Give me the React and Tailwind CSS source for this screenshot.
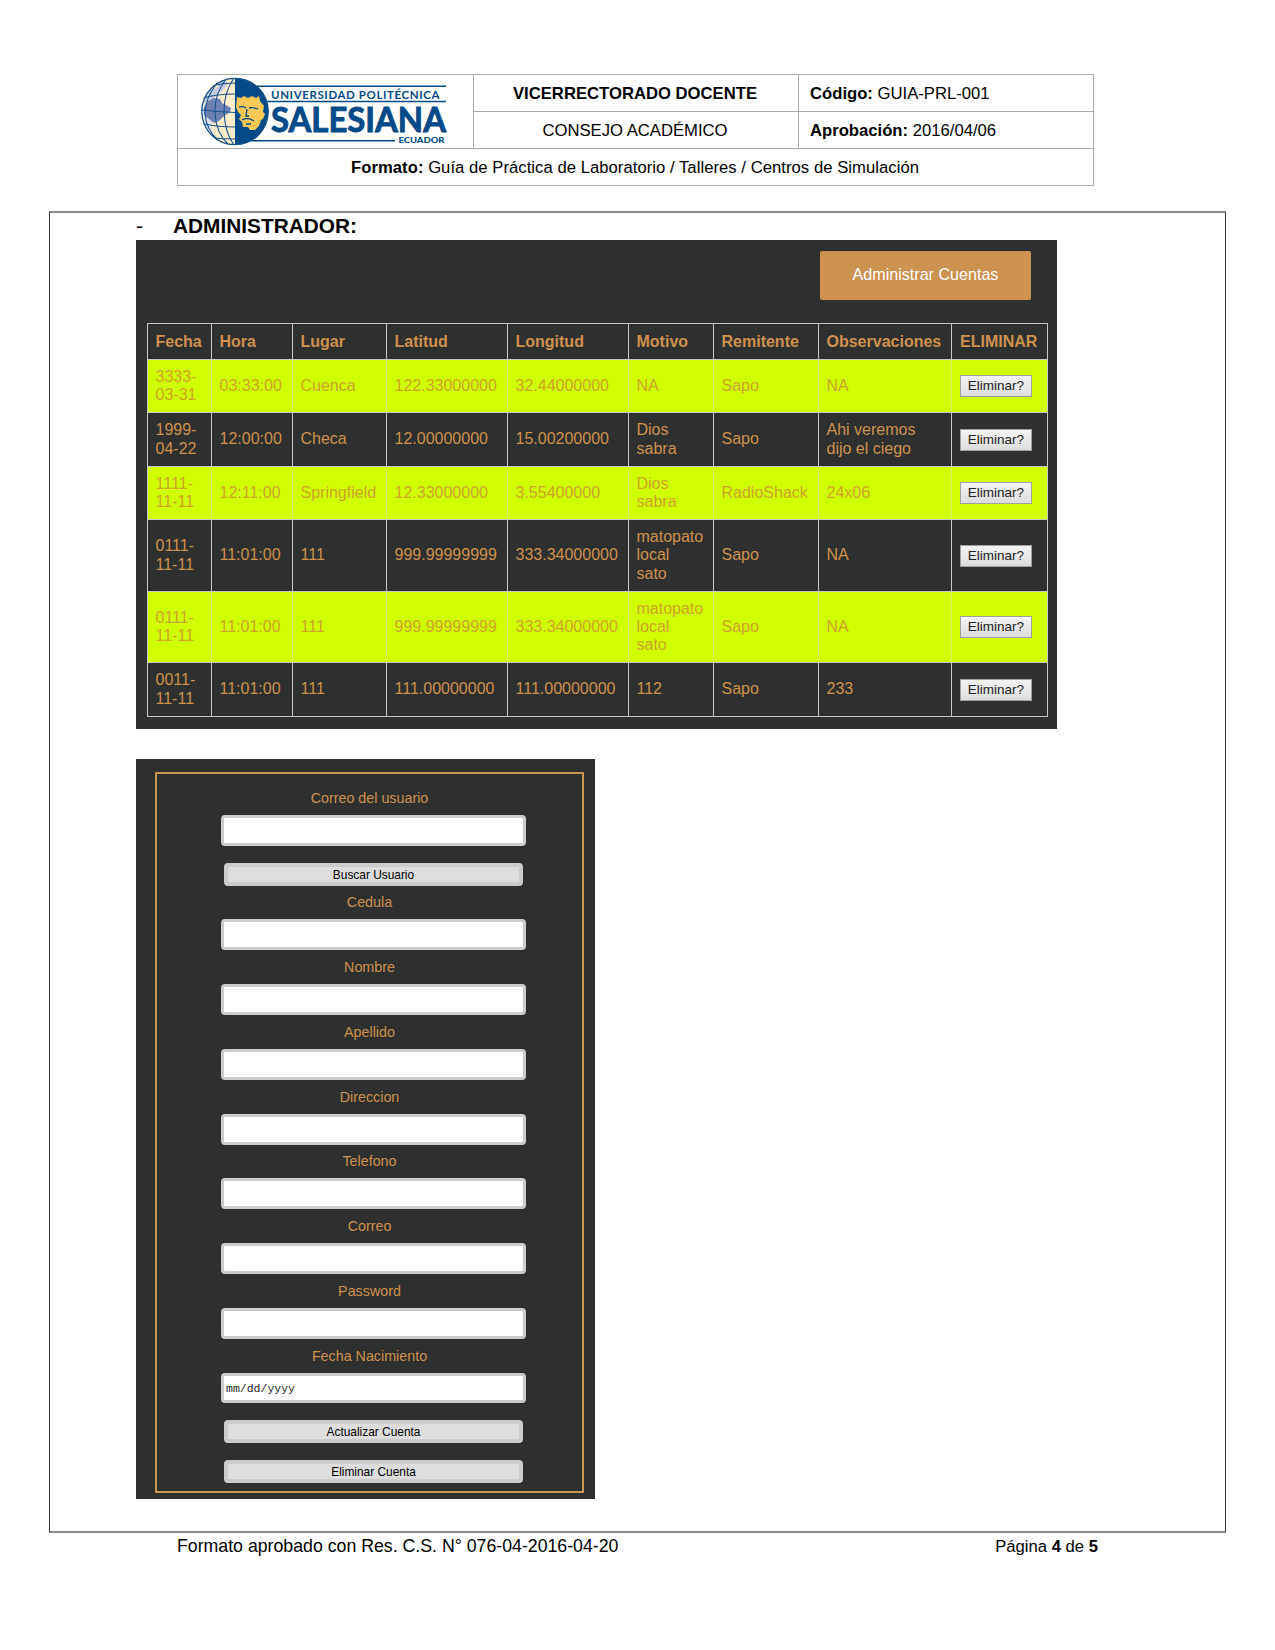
import React from "react";

const HEADERS = ["Fecha", "Hora", "Lugar", "Latitud", "Longitud", "Motivo", "Remitente", "Observaciones"];

const ROWS = [
  { h: "h-[53px]", lime: true, c: ["3333-\n03-31", "03:33:00", "Cuenca", "122.33000000", "32.44000000", "NA", "Sapo", "NA"] },
  { h: "h-[54px]", lime: false, c: ["1999-\n04-22", "12:00:00", "Checa", "12.00000000", "15.00200000", "Dios\nsabra", "Sapo", "Ahi veremos\ndijo el ciego"] },
  { h: "h-[53px]", lime: true, c: ["1111-\n11-11", "12:11:00", "Springfield", "12.33000000", "3.55400000", "Dios\nsabra", "RadioShack", "24x06"] },
  { h: "h-[72px]", lime: false, c: ["0111-\n11-11", "11:01:00", "111", "999.99999999", "333.34000000", "matopato\nlocal\nsato", "Sapo", "NA"] },
  { h: "h-[71px]", lime: true, c: ["0111-\n11-11", "11:01:00", "111", "999.99999999", "333.34000000", "matopato\nlocal\nsato", "Sapo", "NA"] },
  { h: "h-[54px]", lime: false, c: ["0011-\n11-11", "11:01:00", "111", "111.00000000", "111.00000000", "112", "Sapo", "233"] },
];

const GRID = "grid grid-cols-[64px_81px_94px_121px_121px_85px_105px_133px_96px]";

function Logo() {
  return (
    <svg width="260" height="72" viewBox="196 75 260 72" className="block">
      <defs>
        <clipPath id="left"><path d="M235 78A34 33.5 0 0 0 235 145Z" /></clipPath>
      </defs>
      <circle cx="235" cy="111.5" r="33.5" fill="#034a88" />
      <g clipPath="url(#left)">
        <rect x="200" y="76" width="36" height="72" fill="#fdeecb" />
        <path d="M203 98L210 90L217 88L220 82L225 80L228 84L222 91L217 95L211 101L205 104Z" fill="#c3cbe2" />
        <path d="M201 103L208 106L211 110L214 117L211 127L214 138L204 128L200 114Z" fill="#dfe2ec" />
        <path d="M204 108L208 101L214 98L220 99L222 103L231 108L230 112L224 116L219 121L214 123L209 119L204 115Z" fill="#6f80b4" />
        <g fill="none" stroke="#17508a" strokeWidth="1.1">
          <path d="M203 98Q217 94 235 94M201 110Q217 112 235 112.500M204 124Q218 127 235 127M212 86Q222 83 235 83M213 138Q223 139 235 139" />
          <path d="M226 79Q214 95 215 113Q216 133 228 144M217 83Q205 99 205 113Q206 130 218 140M234 78Q224 92 224 112Q225 133 234 145" />
        </g>
      </g>
      <circle cx="235" cy="111.500" r="33.200" fill="none" stroke="#17508a" strokeWidth="1.200" />
      <path d="M237 97L241 98L244 96L248 98L252 96L256 98L259 96L260 101L264 106L263 112L265 114L263 119L261 120L259 126L255 130L250 130L248 127L243 127L242 122L239 119L241 115L238 112L236 107Z" fill="#fbc85a" />
      <path d="M239 107Q243 106 246 108M249 108Q253 107 258 109M247 109L246 116L249 116M242 120Q248 117 254 121M246 124L251 124" fill="none" stroke="#034a88" strokeWidth="1.300" />
      <g stroke="#034a88" strokeWidth="1.400">
        <path d="M257 86.200H446M266 101.500H446M251 140.800H395" />
      </g>
      <g fill="#034a88" fontFamily="Lato, sans-serif" fontWeight="700">
        <text x="271" y="98.500" fontSize="11.500" textLength="168.500" lengthAdjust="spacing">UNIVERSIDAD POLITÉCNICA</text>
        <text x="271" y="131.700" fontSize="34" textLength="175" lengthAdjust="spacingAndGlyphs" stroke="#034a88" strokeWidth="0.900">SALESIANA</text>
        <text x="398.500" y="142.800" fontSize="8" fontWeight="900" textLength="46" lengthAdjust="spacingAndGlyphs">ECUADOR</text>
      </g>
    </svg>
  );
}

function PageHeader() {
  return (
    <header className="ml-[177px] grid h-[112px] w-[917px] grid-cols-[296px_325px_294px] grid-rows-[37px_36px_37px] border border-[#aaa] text-[16.67px] leading-[37px]">
      <div className="row-span-2 border-r border-[#aaa] pl-[18px]">
        <Logo />
      </div>
      <div className="border-r border-b border-[#aaa] pr-[2px] text-center font-bold">VICERRECTORADO DOCENTE</div>
      <div className="border-b border-[#aaa] pl-[11px]"><b>Código:</b> GUIA-PRL-001</div>
      <div className="border-r border-[#aaa] pr-[2px] text-center">CONSEJO ACADÉMICO</div>
      <div className="pl-[11px]"><b>Aprobación:</b> 2016/04/06</div>
      <div className="col-span-3 border-t border-[#aaa] pr-[1px] text-center tracking-[0.035px]"><b>Formato:</b> Guía de Práctica de Laboratorio / Talleres / Centros de Simulación</div>
    </header>
  );
}

function RecordsPanel() {
  return (
    <section className="ml-[86px] h-[489px] w-[921px] bg-[#2d302f] pt-[11px] text-[#cd9150]">
      <button className="ml-[684px] block h-[49px] w-[211px] rounded-[2px] bg-[#cd9150] pb-[2px] text-[16.100px] text-white">Administrar Cuentas</button>
      <div className="mt-[23px] ml-[11px] w-[901px] border-t border-l border-[#c9c9c9] text-[16px] leading-[18.300px]">
        <div className={GRID + " h-[36px] font-bold"}>
          {HEADERS.map((t) => (
            <div key={t} className="flex items-center border-r border-b border-[#c9c9c9] pt-[1px] pl-[7.500px]">{t}</div>
          ))}
          <div className="flex items-center border-r border-b border-[#c9c9c9] pt-[1px] pl-[8px]">ELIMINAR</div>
        </div>
        {ROWS.map((r, i) => (
          <div key={i} className={GRID + " " + r.h + (r.lime ? " bg-[#d0ff00] text-[#cda32c]" : "")}>
            {r.c.map((t, j) => (
              <div key={j} className={"flex items-center border-r border-b border-b-[#c9c9c9] pl-[7.500px] whitespace-pre " + (r.lime ? "border-r-[#d8f070]" : "border-r-[#c9c9c9]")}>{t}</div>
            ))}
            <div className="flex items-center border-r border-b border-[#c9c9c9] pl-[8px]">
              <button className="h-[22px] w-[72px] border border-[#a0a0a0] bg-linear-to-b from-[#f4f4f4] to-[#dcdcdc] text-[13.500px] leading-[20px] text-[#222]">Eliminar?</button>
            </div>
          </div>
        ))}
      </div>
    </section>
  );
}

function Field({ label, value = "", h = "h-[31px]" }) {
  return (
    <div className="flex h-[64.900px] w-[305px] flex-col">
      <label className="mr-[8px] h-[33px] pt-[4px] text-center text-[14.300px] leading-[24px]">{label}</label>
      <input readOnly value={value} className={"block w-[305px] rounded-[4px] border-[3px] border-[#ccc] bg-white pl-[2px] font-['Liberation_Mono',monospace] text-[11.500px] text-[#222] outline-none " + h} />
    </div>
  );
}

function FormButton({ children }) {
  return (
    <button className="mx-[3px] block h-[23px] w-[299px] rounded-[4px] border-4 border-[#ccc] bg-[#ddd] pt-[1px] text-[11.900px] leading-[15px] text-black">{children}</button>
  );
}

function AccountForm() {
  return (
    <section className="mt-[30px] ml-[86px] h-[740px] w-[459px] bg-[#2d302f] pt-[13px] pl-[19px] text-[#cd9150]">
      <div className="h-[721px] w-[429px] border-2 border-[#c99656] pt-[8px] pl-[64px]">
        <Field label="Correo del usuario" />
        <div className="mt-[16px]"><FormButton>Buscar Usuario</FormButton></div>
        {["Cedula", "Nombre", "Apellido", "Direccion", "Telefono", "Correo", "Password"].map((l) => (
          <Field key={l} label={l} />
        ))}
        <Field label="Fecha Nacimiento" value="mm/dd/yyyy" h="h-[30px]" />
        <div className="mt-[15px] flex flex-col gap-[17px]">
          <FormButton>Actualizar Cuenta</FormButton>
          <FormButton>Eliminar Cuenta</FormButton>
        </div>
      </div>
    </section>
  );
}

export default function App() {
  return (
    <div className="h-[1650px] w-[1275px] bg-white pt-[74px] font-['Liberation_Sans',Arial,sans-serif] text-black">
      <PageHeader />
      <main className="mt-[25px] ml-[49px] h-[1322px] w-[1177px] border-x border-y-2 border-x-[#333] border-y-[#8a8a8a]">
        <h1 className="flex h-[27px] pl-[86px] text-[20.830px] leading-[25px] font-bold">
          <span className="w-[37px] font-normal">-</span>ADMINISTRADOR:
        </h1>
        <RecordsPanel />
        <AccountForm />
      </main>
      <footer className="mt-[1px] ml-[177px] flex w-[921px] justify-between leading-[24px]">
        <span className="text-[17.730px]">Formato aprobado con Res. C.S. N° 076-04-2016-04-20</span>
        <span className="pt-[1px] text-[16.670px]">Página <b>4</b> de <b>5</b></span>
      </footer>
    </div>
  );
}
